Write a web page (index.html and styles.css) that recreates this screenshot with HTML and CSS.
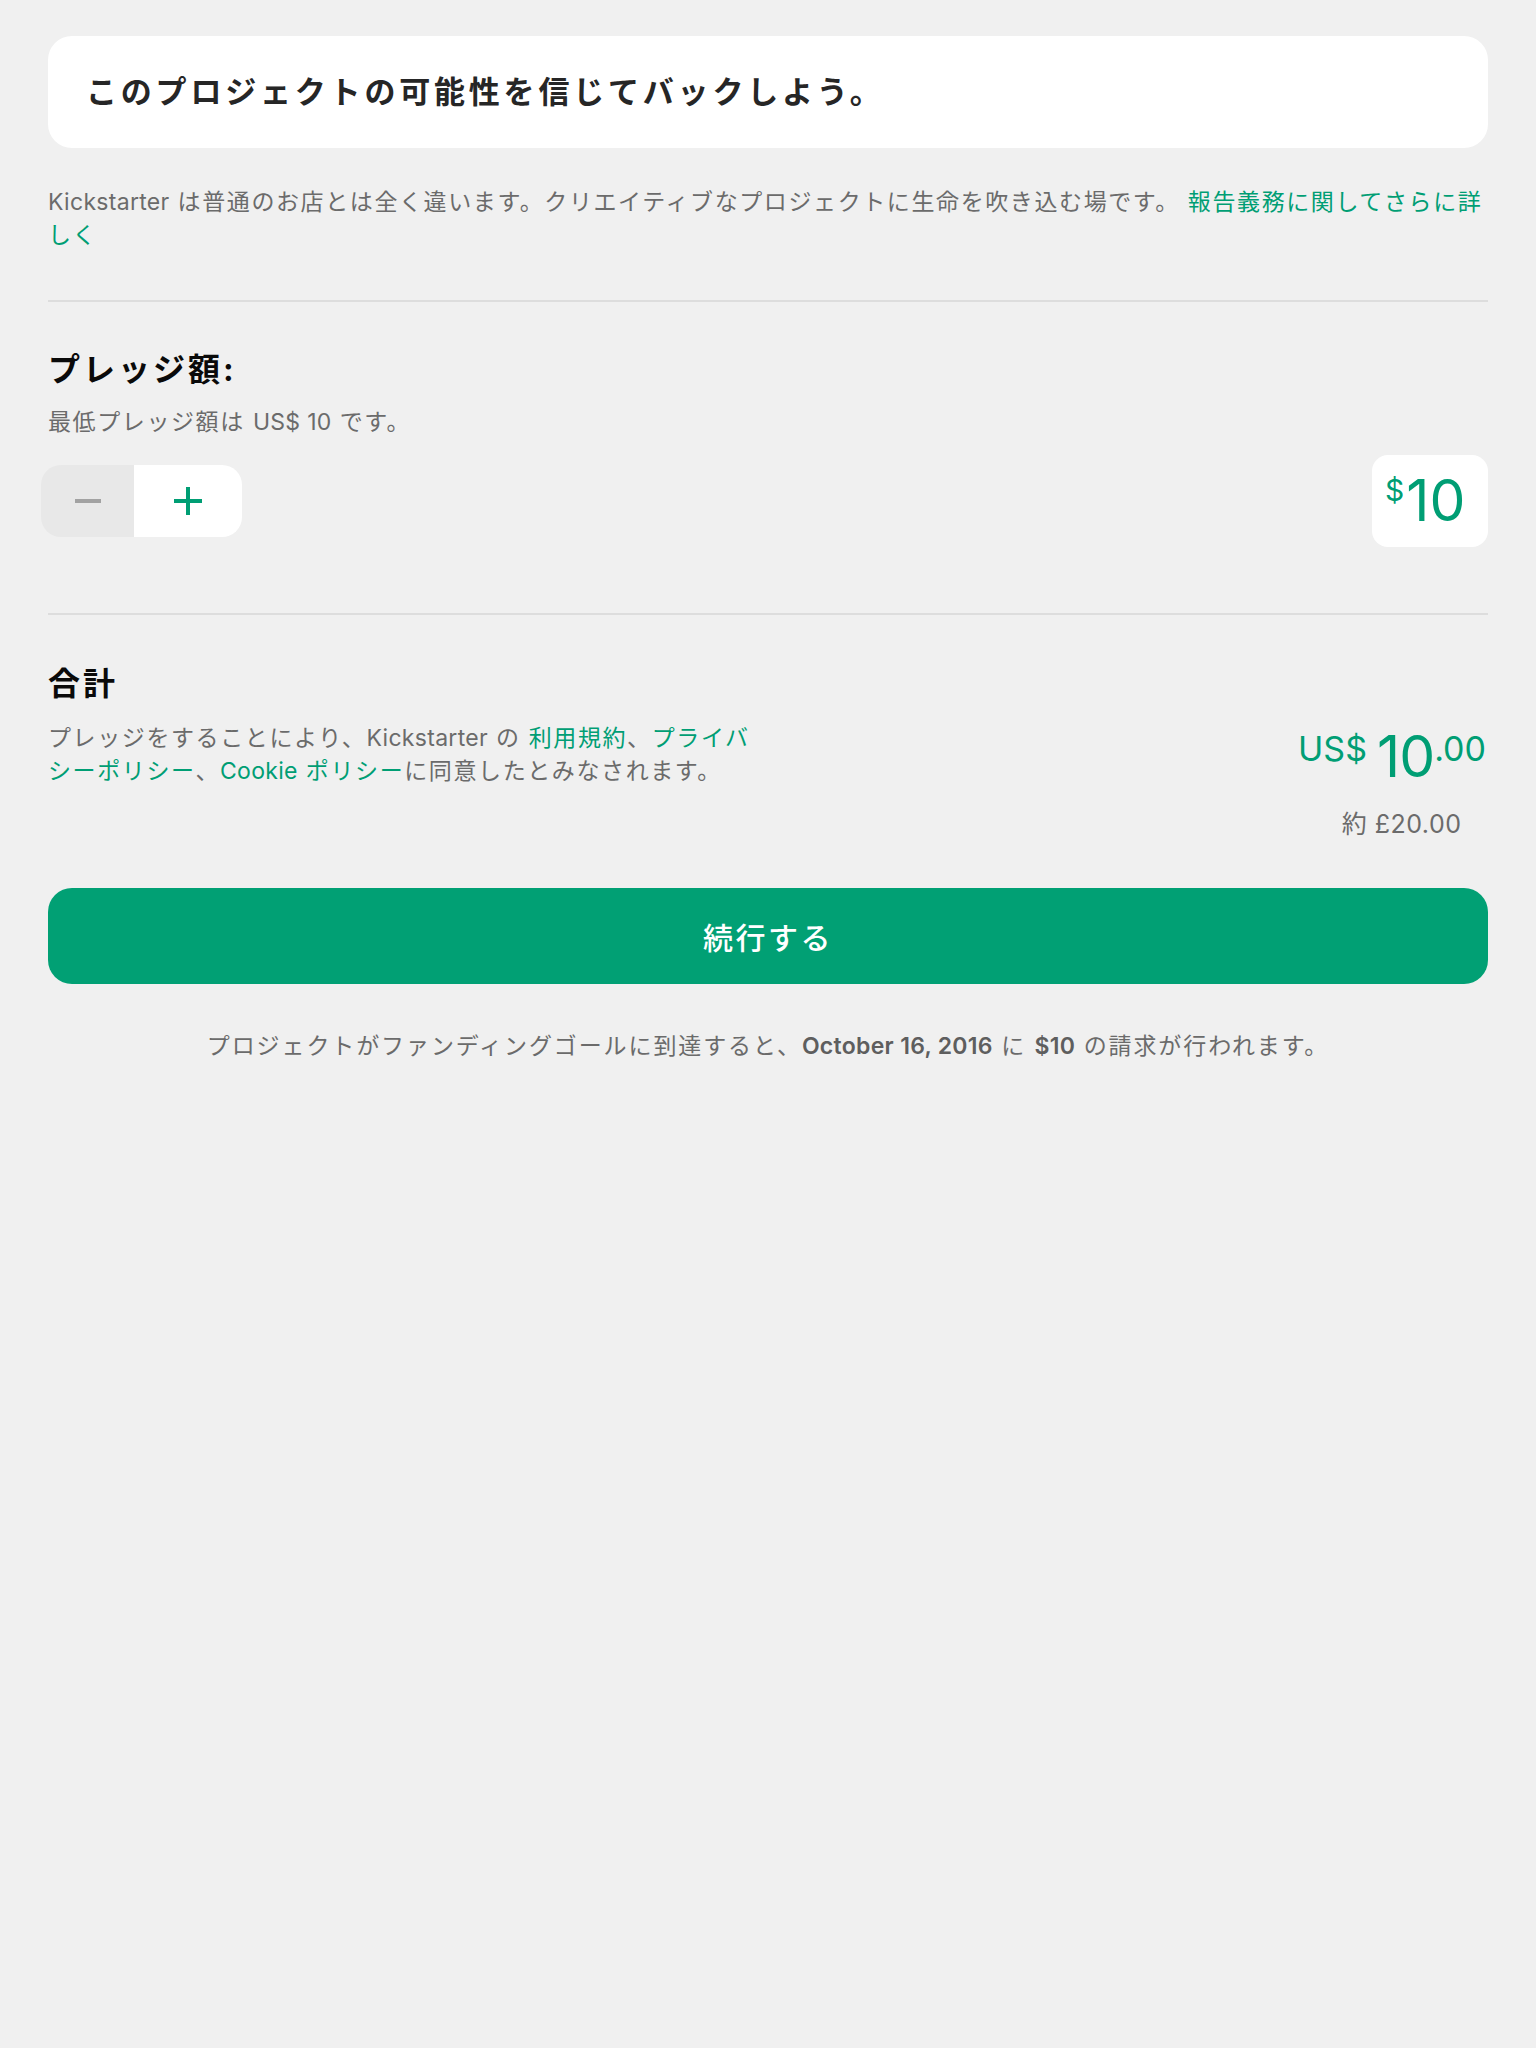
FILE: index.html
```html
<!DOCTYPE html>
<html lang="ja">
<head>
<meta charset="utf-8">
<title>Pledge</title>
<link rel="stylesheet" href="styles.css">
</head>
<body>
<main class="page">
  <div class="hero-card">
    <h1 class="hero-title">このプロジェクトの可能性を信じてバックしよう。</h1>
  </div>
  <p class="intro"><span class="en">Kickstarter</span> は普通のお店とは全く違います。クリエイティブなプロジェクトに生命を吹き込む場です。 <a class="link" href="#">報告義務に関してさらに詳しく</a></p>

  <hr class="divider">

  <section class="pledge">
    <h2 class="section-title">プレッジ額:</h2>
    <p class="sub">最低プレッジ額は <span class="en">US$ 10</span> です。</p>
    <div class="pledge-row">
      <div class="stepper">
        <button class="step step-minus" aria-label="減らす">
          <svg width="26" height="4" viewBox="0 0 26 4"><rect x="0" y="0" width="26" height="4" fill="#a2a2a2"/></svg>
        </button>
        <button class="step step-plus" aria-label="増やす">
          <svg width="28" height="28" viewBox="0 0 28 28"><path d="M14 0V28M0 14H28" stroke="#009e74" stroke-width="4"/></svg>
        </button>
      </div>
      <div class="amount-box"><span class="amount-cur">$</span><span class="amount-num">10</span></div>
    </div>
  </section>

  <hr class="divider divider-2">

  <section class="total">
    <h2 class="section-title">合計</h2>
    <div class="total-row">
      <p class="terms">プレッジをすることにより、<span class="en">Kickstarter</span> の <a class="link" href="#">利用規約</a>、<a class="link" href="#">プライバシーポリシー</a>、<a class="link" href="#"><span class="en">Cookie</span> ポリシー</a>に同意したとみなされます。</p>
      <div class="total-amount">
        <div class="total-line"><span class="total-cur">US$</span><span class="total-num">10</span><span class="total-dec">.00</span></div>
        <div class="approx">約 £20.00</div>
      </div>
    </div>
  </section>

  <button class="continue">続行する</button>

  <p class="footnote">プロジェクトがファンディングゴールに到達すると、<strong class="en">October 16, 2016</strong> に <strong class="en">$10</strong> の請求が行われます。</p>
</main>
</body>
</html>
```

FILE: styles.css
```css
html, body {
  margin: 0;
  padding: 0;
  background: #f0f0f0;
}

body {
  font-family: "Inter", "Noto Sans CJK JP", sans-serif;
  color: #6b6b6b;
}

.page {
  padding: 36px 48px 60px;
}

.en {
  letter-spacing: 0.3px;
}

.hero-card {
  background: #ffffff;
  border-radius: 24px;
  height: 112px;
  display: flex;
  align-items: center;
  padding: 0 38px;
}

.hero-title {
  margin: 0;
  font-size: 31px;
  line-height: 40px;
  font-weight: 600;
  color: #262626;
  letter-spacing: 3.8px;
}

.intro {
  margin: 38px 0 0;
  font-size: 23px;
  line-height: 33px;
  letter-spacing: 1.6px;
}

.link {
  color: #009e74;
  text-decoration: none;
}

.divider {
  border: 0;
  height: 2px;
  background: #dddddd;
  margin: 48px 0 0;
}

.pledge {
  padding-top: 48px;
}

.section-title {
  margin: 0;
  font-size: 32px;
  line-height: 40px;
  font-weight: 700;
  color: #0a0a0a;
  letter-spacing: 3px;
}

.sub {
  margin: 16px 0 0;
  font-size: 23px;
  line-height: 33px;
  letter-spacing: 1.6px;
}

.pledge-row {
  margin-top: 16px;
  height: 92px;
  display: flex;
  align-items: center;
  justify-content: space-between;
}

.stepper {
  margin-left: -7px;
  display: flex;
  height: 72px;
  border-radius: 20px;
  overflow: hidden;
}

.step {
  border: 0;
  padding: 0;
  margin: 0;
  display: flex;
  align-items: center;
  justify-content: center;
  height: 72px;
}

.step-minus {
  width: 93px;
  background: #e8e8e8;
}

.step-plus {
  width: 108px;
  background: #ffffff;
}

.amount-box {
  width: 116px;
  height: 92px;
  box-sizing: border-box;
  background: #ffffff;
  border-radius: 16px;
  display: flex;
  align-items: flex-start;
  padding: 17px 0 0 13px;
  color: #009e74;
}

.amount-cur {
  font-size: 30px;
  line-height: 30px;
  margin-top: 3px;
}

.amount-num {
  font-size: 57px;
  line-height: 57px;
  margin-left: 2px;
}

.divider-2 {
  margin-top: 66px;
}

.total {
  padding-top: 49px;
}

.total-row {
  margin-top: 18px;
  display: flex;
  justify-content: space-between;
  align-items: flex-start;
}

.terms {
  margin: 0;
  max-width: 724px;
  font-size: 23px;
  line-height: 33px;
  letter-spacing: 1.6px;
}

.total-amount {
  margin-right: 2px;
  display: flex;
  flex-direction: column;
  align-items: center;
  color: #009e74;
}

.total-line {
  display: flex;
  align-items: flex-start;
  margin-top: 6px;
}

.total-cur,
.total-dec {
  font-size: 34px;
  line-height: 34px;
  margin-top: 4px;
}

.total-cur {
  margin-right: 10px;
}

.total-num {
  font-size: 57px;
  line-height: 57px;
  letter-spacing: -1px;
}

.approx {
  margin-top: 21px;
  font-size: 25px;
  line-height: 36px;
  color: #6b6b6b;
  letter-spacing: 0.5px;
  padding-left: 19px;
}

.continue {
  display: flex;
  align-items: center;
  justify-content: center;
  width: 100%;
  height: 96px;
  margin-top: 46px;
  border: 0;
  border-radius: 24px;
  background: #01a074;
  color: #ffffff;
  font-family: "Inter", "Noto Sans CJK JP", sans-serif;
  font-size: 30px;
  font-weight: 500;
  letter-spacing: 2.5px;
}

.footnote {
  margin: 46px 0 0;
  text-align: center;
  font-size: 23px;
  line-height: 33px;
  letter-spacing: 1.9px;
}

.footnote strong {
  font-weight: 600;
  color: #5e5e5e;
}
```
